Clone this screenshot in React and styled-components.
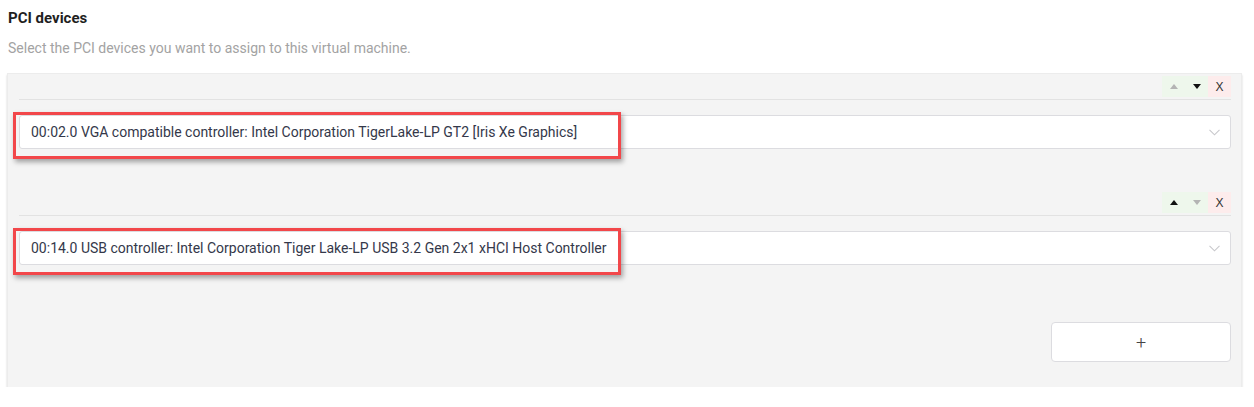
import React from "react"
import styled, { createGlobalStyle } from "styled-components"

const Global = createGlobalStyle`
  body {
    margin: 0;
    padding: 8px 8px 0 8px;
    background: #ffffff;
    font-family: Roboto, "Liberation Sans", sans-serif;
  }
`

const Title = styled.h3`
  margin: 2px 0 0 0;
  font-size: 15px;
  font-weight: 700;
  color: #1f1f1f;
  line-height: 17px;
`

const Hint = styled.p`
  margin: 13px 0 0 0;
  font-size: 14px;
  color: #a3a3a3;
  line-height: 16px;
`

const Panel = styled.div`
  margin: 17px 4px 0 -1px;
  padding: 0 10px 25px 11px;
  background: #f4f4f4;
  border: 1px solid #ececec;
  border-bottom: none;
  box-shadow: 0 2px 2px rgba(0, 0, 0, 0.18);
`

const Item = styled.div`
  margin-bottom: 41px;
`

const ItemHeader = styled.div`
  display: flex;
  justify-content: flex-end;
  align-items: flex-start;
  height: 23px;
  padding-top: 2px;
  border-bottom: 1px solid #e2e2e2;
`

const Ctrl = styled.button`
  width: 23px;
  height: 21px;
  padding: 0;
  border: none;
  display: flex;
  align-items: center;
  justify-content: center;
  background: ${(p) => (p.$danger ? "#fdecec" : "#eef7ec")};
  color: #333;
  font-family: "Liberation Sans", Roboto, sans-serif;
  font-size: 12px;
  cursor: pointer;
`

const Tri = styled.span`
  width: 0;
  height: 0;
  border-left: 4.5px solid transparent;
  border-right: 4.5px solid transparent;
  ${(p) =>
    p.$up
      ? `border-bottom: 5px solid ${p.$off ? "#b4b4b4" : "#111"};`
      : `border-top: 5px solid ${p.$off ? "#b4b4b4" : "#111"};`}
`

const SelectWrap = styled.div`
  position: relative;
  margin-top: 15px;
`

const Select = styled.div`
  height: 32px;
  background: #fff;
  border: 1px solid #dcdce0;
  border-radius: 3px;
  display: flex;
  align-items: center;
  justify-content: space-between;
  padding: 0 10px 0 11px;
  font-size: 14px;
  color: #34384a;
`

const Mark = styled.div`
  position: absolute;
  left: -6px;
  top: -3px;
  width: 602px;
  height: 41px;
  border: 3px solid #f2474a;
  box-shadow: 2px 3px 5px rgba(0, 0, 0, 0.35);
  pointer-events: none;
`

const AddRow = styled.div`
  display: flex;
  justify-content: flex-end;
  margin-top: 57px;
`

const AddButton = styled.button`
  width: 180px;
  height: 40px;
  background: #fff;
  border: 1px solid #dcdce0;
  border-radius: 4px;
  font-family: Roboto, "Liberation Sans", sans-serif;
  font-size: 18px;
  font-weight: 300;
  color: #444;
  cursor: pointer;
`

const Chevron = () => (
  <svg width="11" height="7" viewBox="0 0 11 7">
    <path d="M0.5 0.8 L5.5 5.8 L10.5 0.8" fill="none" stroke="#c8c8cc" strokeWidth="1.1" />
  </svg>
)

const devices = [
  "00:02.0 VGA compatible controller: Intel Corporation TigerLake-LP GT2 [Iris Xe Graphics]",
  "00:14.0 USB controller: Intel Corporation Tiger Lake-LP USB 3.2 Gen 2x1 xHCI Host Controller",
]

export default function App() {
  return (
    <>
      <Global />
      <Title>PCI devices</Title>
      <Hint>Select the PCI devices you want to assign to this virtual machine.</Hint>
      <Panel>
        {devices.map((d, i) => (
          <Item key={d}>
            <ItemHeader>
              <Ctrl><Tri $up $off={i === 0} /></Ctrl>
              <Ctrl><Tri $off={i === devices.length - 1} /></Ctrl>
              <Ctrl $danger>X</Ctrl>
            </ItemHeader>
            <SelectWrap>
              <Select>
                <span>{d}</span>
                <Chevron />
              </Select>
              <Mark />
            </SelectWrap>
          </Item>
        ))}
        <AddRow>
          <AddButton>+</AddButton>
        </AddRow>
      </Panel>
    </>
  )
}
